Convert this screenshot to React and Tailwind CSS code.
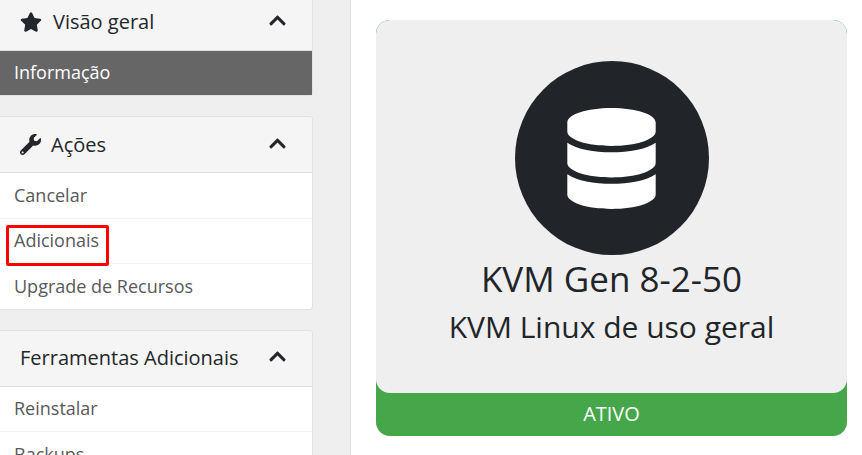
import { FaStar, FaWrench, FaChevronUp, FaDatabase } from "react-icons/fa";

/* SIDEBAR PANEL HEADER */
const PanelHeader = ({ icon, title, className }) => (
  <div
    className={`flex items-center justify-between bg-[#f5f5f5] border-b border-[#dddddd] pl-5 pr-[25px] ${className}`}
  >
    <div className="flex items-center gap-2.5 text-[20px] text-[#23272b]">
      {icon}
      <span>{title}</span>
    </div>
    <FaChevronUp className="text-[19px] text-[#23272b] -mt-[3px]" />
  </div>
);

const MenuItem = ({ label, className = "", last }) => (
  <div
    className={`flex items-center px-3.5 text-[#58595b] text-[18px] ${className} ${
      last ? "" : "border-b border-[#f3f3f3]"
    }`}
  >
    {label}
  </div>
);

const App = () => {
  return (
    <div
      className="relative h-[455px] w-[862px] overflow-hidden flex bg-white"
      style={{ fontFamily: '"Open Sans", sans-serif' }}
    >
      {/* SIDEBAR */}
      <div className="w-[351px] shrink-0 h-full bg-[#efefef] border-r border-[#e3e3e3]">
        <div className="w-[313px] -mt-[10px] bg-white border border-l-0 border-[#e2e2e2] rounded-r-[4px]">
          <PanelHeader
            className="h-[60px] pt-[3px]"
            title="Visão geral"
            icon={<FaStar className="text-[22px] mr-px" />}
          />
          <div className="h-[44px] flex items-center px-3.5 pb-[2px] bg-[#666666] text-white text-[18px]">
            Informação
          </div>
        </div>

        <div className="w-[313px] mt-[20px] bg-white border border-l-0 border-[#e2e2e2] rounded-r-[4px] overflow-hidden">
          <PanelHeader
            className="h-[56px]"
            title="Ações"
            icon={<FaWrench className="text-[21px]" />}
          />
          <MenuItem label="Cancelar" className="h-[46px] pb-px" />
          <MenuItem label="Adicionais" className="h-[45px] pb-[2px]" />
          <MenuItem label="Upgrade de Recursos" className="h-[45px]" last />
        </div>

        <div className="w-[313px] mt-[20px] bg-white border border-l-0 border-[#e2e2e2] rounded-r-[4px] overflow-hidden">
          <PanelHeader className="h-[56px] pb-[2px]" title="Ferramentas Adicionais" />
          <MenuItem label="Reinstalar" className="h-[45px] pb-[2px]" />
          <MenuItem label="Backups" className="h-[45px]" last />
        </div>
      </div>

      {/* PRODUCT CARD */}
      <div className="pl-[25px] pt-[20px]">
        <div className="w-[471px] h-[416px] flex flex-col rounded-[14px] bg-[#46a64a] overflow-hidden">
          <div className="h-[373px] bg-[#efefef] rounded-[14px] flex flex-col items-center pt-[41px]">
            <div className="w-[194px] h-[194px] shrink-0 rounded-full bg-[#212529] flex items-center justify-center">
              <FaDatabase className="text-[101px] text-white" />
            </div>
            <div className="-mt-px text-[35px] leading-[50px] text-[#212529]">
              KVM Gen 8-2-50
            </div>
            <div className="mt-px text-[30px] leading-[44px] text-[#212529]">
              KVM Linux de uso geral
            </div>
          </div>
          <div className="flex-1 flex items-center justify-center pb-[2px] text-white text-[20px]">
            ATIVO
          </div>
        </div>
      </div>

      {/* RED HIGHLIGHT */}
      <div className="absolute left-[6px] top-[225px] w-[103px] h-[41px] border-[3px] border-[#ff0000] rounded-[2px]" />
    </div>
  );
};

export default App;
